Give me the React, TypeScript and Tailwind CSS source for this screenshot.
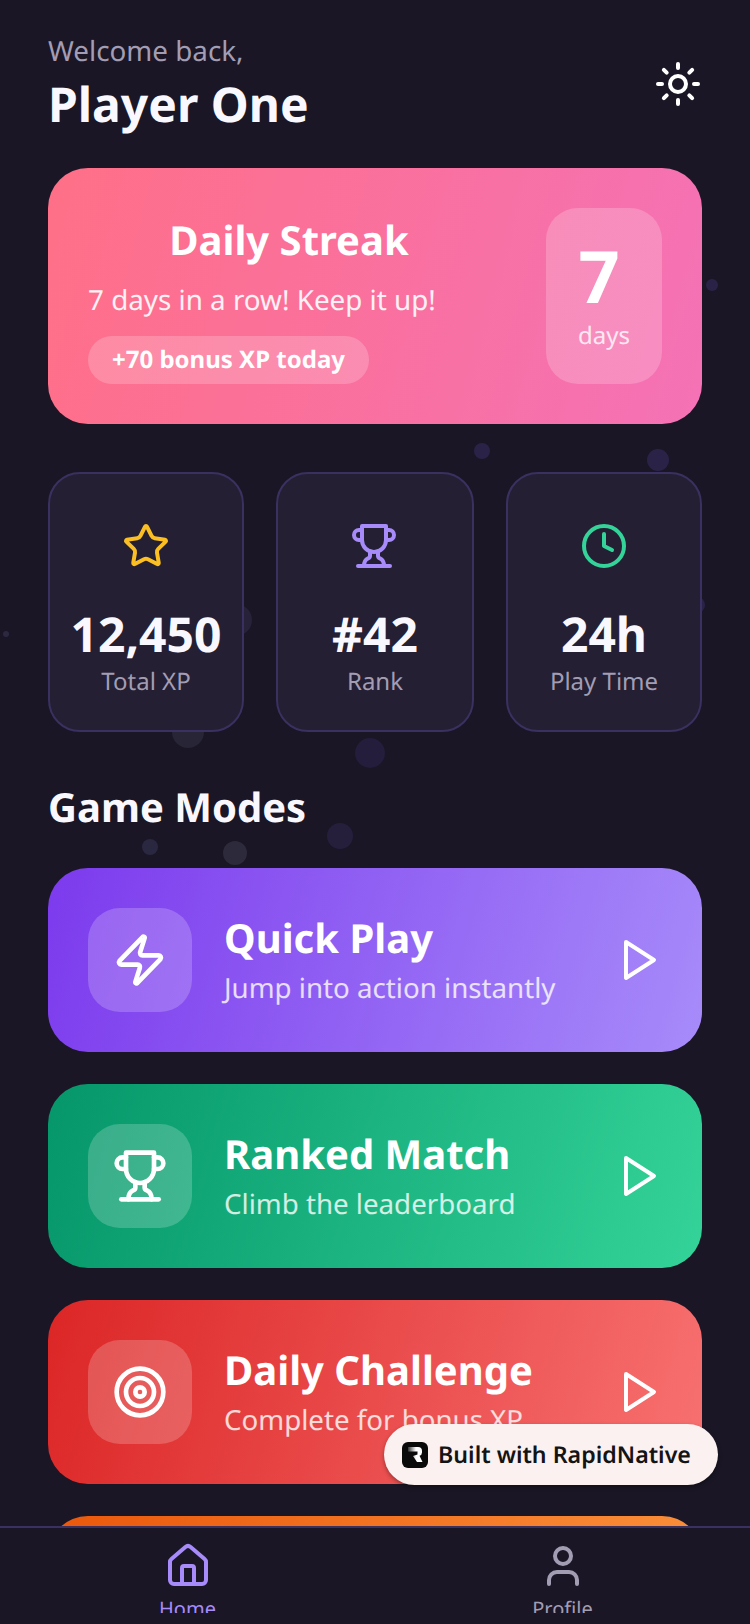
import { Clock, House, Star, Sun, Target, User, Zap } from "lucide-react";

const font = "[font-family:'Noto_Sans',sans-serif] [text-rendering:geometricPrecision]";

// older lucide trophy, the current one in the package has different strokes
function Trophy({ className }: { className?: string }) {
  return (
    <svg
      viewBox="0 0 24 24"
      fill="none"
      stroke="currentColor"
      strokeWidth={2}
      strokeLinecap="round"
      strokeLinejoin="round"
      className={className}
    >
      <path d="M6 9H4.5a2.5 2.5 0 0 1 0-5H6" />
      <path d="M18 9h1.5a2.5 2.5 0 0 0 0-5H18" />
      <path d="M4 22h16" />
      <path d="M10 14.66V17c0 .55-.47.98-.97 1.21C7.85 18.75 7 20.24 7 22" />
      <path d="M14 14.66V17c0 .55.47.98.97 1.21C16.15 18.75 17 20.24 17 22" />
      <path d="M18 2H6v7a6 6 0 0 0 12 0V2Z" />
    </svg>
  );
}

function PlayArrow() {
  return (
    <svg
      viewBox="0 0 24 24"
      fill="none"
      stroke="currentColor"
      strokeWidth={2}
      strokeLinecap="round"
      strokeLinejoin="round"
      className="w-12 h-12 text-white shrink-0"
    >
      <polygon points="6 3 20 12 6 21 6 3" />
    </svg>
  );
}

function RapidLogo() {
  return (
    <svg viewBox="0 0 26 26" className="w-[26px] h-[26px] shrink-0">
      <defs>
        <linearGradient id="rn" x1="0" x2="1" y1="0" y2="0">
          <stop offset="0" stopColor="#333" />
          <stop offset="0.55" stopColor="#fff" />
        </linearGradient>
      </defs>
      <rect width="26" height="26" rx="6" fill="#0a0a0a" />
      <path
        d="M6 5h10a4 4 0 0 1 4 4v1.5a3.5 3.5 0 0 1-2.5 3.3L20.5 20H15l-4-6 4.5-1.5V9.5H6z"
        fill="url(#rn)"
      />
    </svg>
  );
}

const bubbles = [
  "left-[706px] top-[279px] w-3 h-3 bg-[#2a2347]",
  "left-[474px] top-[443px] w-4 h-4 bg-[#2a2347]",
  "left-[647px] top-[449px] w-[22px] h-[22px] bg-[#2a2347]",
  "left-[3px] top-[631px] w-[6px] h-[6px] bg-[#2c2840]",
  "left-[220px] top-[604px] w-8 h-8 bg-[#27223a]",
  "left-[172px] top-[716px] w-8 h-8 bg-[#282536]",
  "left-[355px] top-[738px] w-[30px] h-[30px] bg-[#241d3b]",
  "left-[689px] top-[597px] w-4 h-4 bg-[#2a2347]",
  "left-[327px] top-[823px] w-[26px] h-[26px] bg-[#251f3c]",
  "left-[142px] top-[839px] w-4 h-4 bg-[#2a2740]",
  "left-[223px] top-[841px] w-6 h-6 bg-[#2c2a3b]",
];

const stats = [
  { icon: <Star className="w-12 h-12 text-[#fbbf24]" />, value: "12,450", label: "Total XP" },
  { icon: <Trophy className="w-12 h-12 mr-[2px] text-[#a78bfa]" />, value: "#42", label: "Rank" },
  { icon: <Clock className="w-12 h-12 text-[#34d399]" />, value: "24h", label: "Play Time" },
];

const modes = [
  {
    title: "Quick Play",
    sub: "Jump into action instantly",
    bg: "bg-[linear-gradient(106deg,#7c3aed,#a78bfa)]",
    icon: <Zap className="w-14 h-14 text-white" />,
  },
  {
    title: "Ranked Match",
    sub: "Climb the leaderboard",
    bg: "bg-[linear-gradient(106deg,#059669,#34d399)]",
    icon: <Trophy className="w-14 h-14 text-white" />,
  },
  {
    title: "Daily Challenge",
    sub: "Complete for bonus XP",
    bg: "bg-[linear-gradient(106deg,#dc2626,#f87171)]",
    icon: <Target className="w-14 h-14 text-white" />,
  },
  {
    title: "Tournament",
    sub: "Compete for prizes",
    bg: "bg-[linear-gradient(106deg,#ea580c,#fb923c)]",
    icon: <Trophy className="w-14 h-14 text-white" />,
  },
];

export default function App() {
  return (
    <div className={`${font} relative w-[750px] h-[1624px] overflow-hidden bg-[#1a1625] flex flex-col`}>
      {bubbles.map((b) => (
        <div key={b} className={`absolute rounded-full ${b}`} />
      ))}

      <main className="relative flex-1 min-h-0 overflow-hidden px-12 pt-8">
        <header className="flex items-center justify-between mb-[30px]">
          <div>
            <p className="text-[27.8px] leading-[38px] text-[#a39db3]">Welcome back,</p>
            <h1 className="mt-[2px] text-[48px] leading-[66px] font-bold text-[#faf8ff]">Player One</h1>
          </div>
          <Sun className="w-12 h-12 text-white mb-[2px]" />
        </header>

        <section className="flex h-[256px] p-10 rounded-[40px] bg-[linear-gradient(105deg,#ff6f87,#f472b6)] text-white">
          <div className="flex-1 flex flex-col justify-end items-start">
            <h2 className="self-center pr-[56px] mb-[2px] text-[40px] leading-[48px] font-bold">Daily Streak</h2>
            <p className="mt-[15px] text-[27.8px] leading-[38px] text-white/90">7 days in a row! Keep it up!</p>
            <span className="mt-[17px] h-12 px-6 flex items-center rounded-full bg-white/20 text-[24px] font-bold">
              +70 bonus XP today
            </span>
          </div>
          <div className="w-[116px] pb-[7px] rounded-[32px] bg-white/20 flex flex-col items-center justify-center">
            <span className="mr-[10px] text-[72px] leading-[84px] font-bold">7</span>
            <span className="mt-[3px] text-[24px] leading-[30px] text-white/80">days</span>
          </div>
        </section>

        <section className="grid grid-cols-[196px_198px_196px] gap-8 mt-12">
          {stats.map((s) => (
            <div
              key={s.label}
              className="h-[260px] pt-[48px] flex flex-col items-center rounded-[32px] border-2 border-[#3a3160] bg-[#241f33]"
            >
              {s.icon}
              <span className="mt-[35px] text-[48px] leading-[60px] font-bold text-[#faf8ff]">{s.value}</span>
              <span className="mt-[1px] text-[24px] leading-[32px] text-[#a39db3]">{s.label}</span>
            </div>
          ))}
        </section>

        <h2 className="mt-[51px] mb-[37px] text-[40px] leading-[48px] font-bold text-[#faf8ff]">Game Modes</h2>

        <section className="flex flex-col gap-8">
          {modes.map((m) => (
            <div key={m.title} className={`flex items-center shrink-0 h-[184px] p-10 rounded-[40px] ${m.bg}`}>
              <div className="w-[104px] h-[104px] shrink-0 rounded-[32px] bg-white/20 flex items-center justify-center">
                {m.icon}
              </div>
              <div className="flex-1 ml-8 mb-[3px] flex flex-col gap-1">
                <span className="text-[40px] leading-[54px] font-bold text-white">{m.title}</span>
                <span className="text-[27.7px] leading-[38px] text-white/80">{m.sub}</span>
              </div>
              <PlayArrow />
            </div>
          ))}
        </section>
      </main>

      <nav className="relative h-[98px] shrink-0 border-t-2 border-[#3a3160] bg-[#1a1625]">
        <div className="flex h-[85px] overflow-hidden pt-[14px]">
          <div className="flex-1 flex flex-col items-center text-[#a78bfa]">
            <House className="w-12 h-12 shrink-0" />
            <span className="mt-[5px] text-[20px] leading-[28px]">Home</span>
          </div>
          <div className="flex-1 flex flex-col items-center text-[#a39db3]">
            <User className="w-12 h-12 shrink-0" />
            <span className="mt-[5px] text-[20px] leading-[28px]">Profile</span>
          </div>
        </div>
      </nav>

      <div className="absolute left-[384px] top-[1424px] w-[334px] h-[61px] rounded-full bg-[#fbf1f1] shadow-[0_2px_4px_rgba(0,0,0,0.35)] flex items-center pl-[18px] gap-[10px]">
        <RapidLogo />
        <span className="text-[23.2px] font-semibold text-[#141414] whitespace-nowrap">Built with RapidNative</span>
      </div>
    </div>
  );
}
